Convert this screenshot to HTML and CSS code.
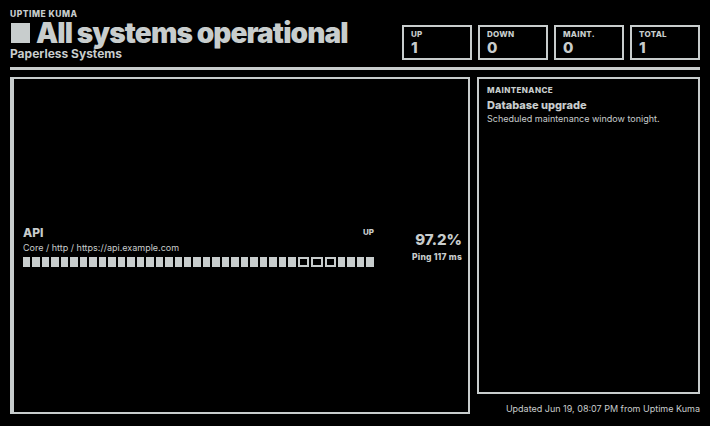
FILE: index.html
```html
<!DOCTYPE html>
<html lang="en">
<head>
    <meta charset="UTF-8">
    <meta name="viewport" content="width=device-width, initial-scale=1.0">
    <title>Paperless Systems status</title>
    <link rel="stylesheet" href="styles.css">
</head>
<body>

<div class="page">
    <header class="header">
        <div class="brand">
            <div class="eyebrow">UPTIME KUMA</div>
            <h1 class="title"><span class="status-box"></span>All systems operational</h1>
            <div class="subtitle">Paperless Systems</div>
        </div>
        <div class="stats">
            <div class="stat"><div class="stat-label">UP</div><div class="stat-value">1</div></div>
            <div class="stat"><div class="stat-label">DOWN</div><div class="stat-value">0</div></div>
            <div class="stat"><div class="stat-label">MAINT.</div><div class="stat-value">0</div></div>
            <div class="stat"><div class="stat-label">TOTAL</div><div class="stat-value">1</div></div>
        </div>
    </header>
    <div class="rule"></div>

    <main class="main">
        <section class="monitors">
            <div class="monitor">
                <div class="monitor-info">
                    <div class="monitor-head">
                        <span class="monitor-name">API</span>
                        <span class="monitor-state">UP</span>
                    </div>
                    <div class="monitor-path">Core / http / https://api.example.com</div>
                    <div class="beats" id="beats"></div>
                </div>
                <div class="monitor-stats">
                    <div class="uptime">97.2%</div>
                    <div class="ping">Ping 117 ms</div>
                </div>
            </div>
        </section>

        <aside class="side">
            <div class="maint">
                <div class="maint-label">MAINTENANCE</div>
                <div class="maint-title">Database upgrade</div>
                <div class="maint-text">Scheduled maintenance window tonight.</div>
            </div>
            <div class="footer">Updated Jun 19, 08:07 PM from Uptime Kuma</div>
        </aside>
    </main>
</div>

<script>
    // 36 heartbeats, three missed ones near the end
    const beats = document.getElementById('beats');
    for (let i = 0; i < 36; i++) {
        const beat = document.createElement('span');
        beat.className = (i >= 29 && i <= 31) ? 'beat miss' : 'beat';
        beats.appendChild(beat);
    }
</script>

</body>
</html>
```

FILE: styles.css
```css
* {
    box-sizing: border-box;
}
body {
    margin: 0;
    background-color: #000;
    color: #c8cdcd;
    font-family: Inter, "Liberation Sans", sans-serif;
}
.page {
    width: 710px;
    height: 426px;
    padding: 9px 10px 12px 10px;
    display: flex;
    flex-direction: column;
}
.header {
    display: flex;
    justify-content: space-between;
    align-items: flex-start;
}
.eyebrow {
    font-size: 8.5px;
    font-weight: 800;
    letter-spacing: 0.5px;
    line-height: 11px;
}
.title {
    display: flex;
    align-items: center;
    margin: 0;
    font-size: 28px;
    font-weight: 900;
    letter-spacing: -0.9px;
    line-height: 26px;
}
.status-box {
    width: 19px;
    height: 20px;
    background-color: #c8cdcd;
    margin: 0 6px 0 1px;
}
.subtitle {
    font-size: 12px;
    font-weight: 700;
    line-height: 14px;
    margin-top: 1px;
}
.stats {
    display: flex;
    gap: 6px;
    margin-top: 16px;
}
.stat {
    width: 70px;
    height: 35px;
    border: 2px solid #c8cdcd;
    padding: 2px 7px;
}
.stat-label {
    font-size: 8px;
    font-weight: 800;
    letter-spacing: 0.3px;
    line-height: 11px;
}
.stat-value {
    font-size: 15px;
    font-weight: 800;
    line-height: 16px;
}
.rule {
    height: 3px;
    background-color: #c8cdcd;
    margin-top: 6px;
}
.main {
    flex: 1;
    display: grid;
    grid-template-columns: 460px 1fr;
    gap: 7px;
    margin-top: 7px;
}
.monitors {
    border: 2px solid #c8cdcd;
    border-left-width: 4px;
    display: flex;
    align-items: center;
    padding: 0 6px 0 9px;
}
.monitor {
    flex: 1;
    display: flex;
    align-items: center;
    justify-content: space-between;
}
.monitor-info {
    width: 351px;
}
.monitor-head {
    display: flex;
    justify-content: space-between;
    align-items: center;
}
.monitor-name {
    font-size: 12px;
    font-weight: 800;
}
.monitor-state {
    font-size: 8px;
    font-weight: 800;
}
.monitor-path {
    font-size: 9px;
    margin-top: 2px;
}
.beats {
    display: flex;
    gap: 2px;
    margin-top: 4px;
}
.beat {
    flex: 1;
    height: 10px;
    background-color: #c8cdcd;
}
.beat.miss {
    background-color: transparent;
    border: 2px solid #c8cdcd;
}
.monitor-stats {
    text-align: right;
}
.uptime {
    font-size: 15px;
    font-weight: 800;
}
.ping {
    font-size: 8.5px;
    font-weight: 800;
    letter-spacing: 0.2px;
    margin-top: 3px;
}
.side {
    display: flex;
    flex-direction: column;
}
.maint {
    flex: 1;
    border: 2px solid #c8cdcd;
    padding: 6px 8px;
}
.maint-label {
    font-size: 8px;
    font-weight: 800;
    letter-spacing: 0.4px;
}
.maint-title {
    font-size: 11px;
    font-weight: 800;
    margin-top: 3px;
}
.maint-text {
    font-size: 9px;
    margin-top: 1px;
}
.footer {
    font-size: 9px;
    text-align: right;
    margin-top: 9px;
}
```
